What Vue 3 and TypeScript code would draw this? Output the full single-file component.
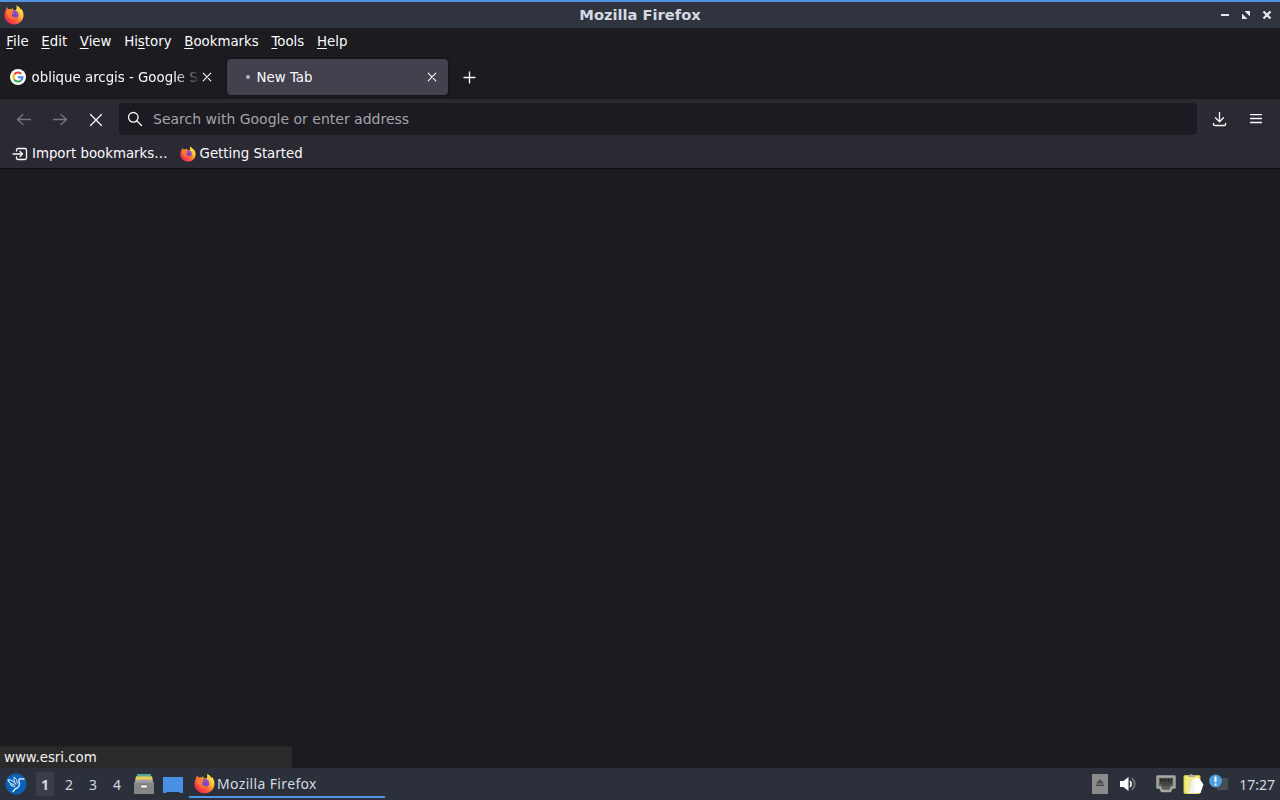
<script setup lang="ts">
import { ref } from 'vue'

interface MenuItem {
  before: string
  key: string
  after: string
}

const menus: MenuItem[] = [
  { before: '', key: 'F', after: 'ile' },
  { before: '', key: 'E', after: 'dit' },
  { before: '', key: 'V', after: 'iew' },
  { before: 'Hi', key: 's', after: 'tory' },
  { before: '', key: 'B', after: 'ookmarks' },
  { before: '', key: 'T', after: 'ools' },
  { before: '', key: 'H', after: 'elp' }
]

const address = ref('')
const desktops = [1, 2, 3, 4]
const currentDesktop = ref(1)
</script>

<template>
  <div class="screen">
    <!-- shared firefox logo -->
    <svg class="defs" width="0" height="0">
      <defs>
        <linearGradient id="fox-body" x1="0.9" y1="0.1" x2="0.15" y2="0.85">
          <stop offset="0" stop-color="#fff04e" />
          <stop offset="0.3" stop-color="#ffc533" />
          <stop offset="0.6" stop-color="#ff6a36" />
          <stop offset="1" stop-color="#ee2a50" />
        </linearGradient>
        <linearGradient id="fox-face" x1="0" y1="0" x2="1" y2="0.6">
          <stop offset="0" stop-color="#ff8a34" />
          <stop offset="1" stop-color="#ff6238" />
        </linearGradient>
        <symbol id="firefox" viewBox="0 0 20 20">
          <path fill="url(#fox-body)" d="M12.200.6c2.600 1 4 2.500 4.600 4.300.3-.3.300-.8.200-1.300 1.700 1.800 2.500 4.200 2.500 6.600 0 5.200-4.200 9.200-9.500 9.200S.5 15.600.5 10.500c0-2.300.6-4.200 1.500-5.800.1-1 .5-1.900 1.200-2.600.1 1 .5 1.700 1.100 2.200 1-.3 2-.3 2.900.100.5-.8 1.200-1.200 2-1.300-.4.700-.5 1.300-.3 1.900l3 .3c.8-1.400 1-3 .3-4.700z" />
          <circle cx="10.300" cy="9.800" r="4.200" fill="#7a46cc" />
          <path d="M8.500 6.200q3.500-1 5.500 1.800 1 2-.2 4-.5-3.500-5.300-5.800z" fill="#9a50c8" />
          <path fill="url(#fox-face)" d="M2.800 7c1.400-1.700 3.500-2 4.800-1l1 1.200 1.400.4c-.2.700-1 1.100-1.700 1.300-.7 1-.3 2.300.7 2.900 1.500.8 3 .3 4.300.6-1 1.800-3.600 2.600-6 1.600C4.600 13 2.900 10 2.800 7z" />
        </symbol>
      </defs>
    </svg>

    <header class="titlebar">
      <svg class="title-logo" width="20" height="20"><use href="#firefox" /></svg>
      <span class="title">Mozilla Firefox</span>
      <div class="window-buttons">
        <svg width="10" height="12" viewBox="0 0 10 12"><path d="M1 6h8" stroke="#e6e9ef" stroke-width="2" /></svg>
        <svg width="10" height="12" viewBox="0 0 10 12"><path d="M3.500 2H9v5.500zM1 4.500V10h5.500z" fill="#e6e9ef" /></svg>
        <svg width="10" height="12" viewBox="0 0 10 12"><path d="M1.500 2.500l7 7m0-7l-7 7" stroke="#e6e9ef" stroke-width="2.300" /></svg>
      </div>
    </header>

    <nav class="menubar">
      <span v-for="m in menus" :key="m.key" class="menu">{{ m.before }}<u>{{ m.key }}</u>{{ m.after }}</span>
    </nav>

    <div class="tabs">
      <div class="tab">
        <svg class="favicon" width="16" height="16" viewBox="0 0 16 16">
          <circle cx="8" cy="8" r="8" fill="#fff" />
          <g fill="none" stroke-width="2">
            <path d="M4.200 5.500A4.600 4.600 0 0 1 11.300 4.800" stroke="#ea4335" />
            <path d="M4.200 10.500A4.600 4.600 0 0 1 4.200 5.500" stroke="#fbbc05" />
            <path d="M11 11.500A4.600 4.600 0 0 1 4.200 10.500" stroke="#34a853" />
            <path d="M8 8.200h4.500A4.600 4.600 0 0 1 11 11.500" stroke="#4285f4" />
          </g>
        </svg>
        <span class="tab-label">oblique arcgis - Google Search</span>
        <svg class="tab-close" width="10" height="10" viewBox="0 0 10 10"><path d="M1.200 1.200l7.600 7.600m0-7.600l-7.600 7.600" /></svg>
      </div>
      <div class="tab active">
        <i class="busy"></i>
        <span class="tab-label">New Tab</span>
        <svg class="tab-close" width="10" height="10" viewBox="0 0 10 10"><path d="M1.200 1.200l7.600 7.600m0-7.600l-7.600 7.600" /></svg>
      </div>
      <svg class="new-tab" width="14" height="14" viewBox="0 0 14 14"><path d="M6.500 2v11M1 7.500h11" /></svg>
    </div>

    <div class="toolbar">
      <div class="nav-buttons">
        <svg class="off" width="16" height="16" viewBox="0 0 16 16"><path d="M14.500 7.500H1.500M7 2.500L1.500 7.500 7 12.500" /></svg>
        <svg class="off" width="16" height="16" viewBox="0 0 16 16"><path d="M1.500 7.500h13M9 2.500L14.500 7.500 9 12.500" /></svg>
        <svg width="16" height="16" viewBox="0 0 16 16"><path d="M2.500 2.500l11 11m0-11l-11 11" /></svg>
      </div>
      <div class="urlbar">
        <svg width="16" height="16" viewBox="0 0 16 16"><circle cx="6.300" cy="6.300" r="4.800" /><path d="M10 10l4.500 4.500" /></svg>
        <input v-model="address" placeholder="Search with Google or enter address">
      </div>
      <svg class="download" width="16" height="16" viewBox="0 0 16 16"><path d="M7.500 0v9.500M3.500 5.700l4 4 4-4M1.500 11.500v.7q0 1.300 1.300 1.300h9.500q1.300 0 1.300-1.300v-.7" /></svg>
      <svg class="hamburger" width="14" height="12" viewBox="0 0 14 12"><path d="M1.500.5h11M1.500 4.500h11M1.500 8.500h11" /></svg>
    </div>

    <div class="bookmarks">
      <svg class="import" width="16" height="16" viewBox="0 0 16 16"><path d="M4.500 5V4q0-1.500 1.500-1.500h7q1.500 0 1.500 1.500v8q0 1.500-1.500 1.500H6q-1.500 0-1.500-1.500v-1M1 8h9.500M8 5.500L10.500 8 8 10.500" /></svg>
      <span class="import-label">Import bookmarks…</span>
      <svg width="16" height="16"><use href="#firefox" /></svg>
      <span class="started-label">Getting Started</span>
    </div>

    <main class="page">
      <div class="status">www.esri.com</div>
    </main>

    <footer class="panel">
      <svg class="start" width="22" height="22" viewBox="0 0 22 22">
        <circle cx="11" cy="11" r="10.500" fill="#0a62b8" />
        <!-- hummingbird: wings, head with beak, tail -->
        <g fill="none" stroke="#d9efff" stroke-linecap="round" stroke-linejoin="round">
          <path d="M3 6.500c3 .3 5.800 1.800 8 4.500M3 6.500c.6 2.800 2.800 4.500 6 5M5.500 11.500c1 1.500 2.700 2 4.500 1.500" stroke-width="1.100" />
          <path d="M9.500 8.500c-.6-1.500-.7-3-.3-4.500 2 1.600 3 3.500 3 6" stroke-width="1" />
          <path d="M19 6l-3-.2c-1.700-.3-2.500.9-2 2.500 1.100 3.600 0 6.500-3.700 7.400L8 18.500" stroke-width="1.400" />
        </g>
      </svg>
      <div class="desktops">
        <span v-for="d in desktops" :key="d" class="desktop" :class="{ current: d === currentDesktop }">{{ d }}</span>
      </div>
      <svg class="files" width="20" height="22" viewBox="0 0 20 22">
        <path d="M3.500 1h13l1 3H2.500z" fill="#54a99a" />
        <path d="M2 3.500h16l1 4H1z" fill="#e8d35a" />
        <path d="M2.500 6.500h15L20 10H0z" fill="#a2a2a2" />
        <path d="M0 9.500h20V20q0 1-1 1H1q-1 0-1-1z" fill="#878787" />
        <rect x="6" y="11.500" width="8" height="4" rx="1" fill="#777" />
        <rect x="7" y="12.500" width="6" height="2" fill="#fff" />
      </svg>
      <svg class="show-desktop" width="20" height="16" viewBox="0 0 20 16"><path d="M0 0h20v16h-3l-1-1H4l-1 1H0z" fill="#4a90e2" /></svg>
      <div class="task">
        <svg width="21" height="21"><use href="#firefox" /></svg>
        <span>Mozilla Firefox</span>
      </div>

      <div class="tray">
        <svg class="eject" width="16" height="20" viewBox="0 0 16 20">
          <rect width="16" height="20" fill="#8b8b8b" />
          <path d="M8 5l4 4.500H4zM4 10.500h8v1.500H4z" fill="#4b4b4b" />
        </svg>
        <svg class="volume" width="17" height="16" viewBox="0 0 17 16">
          <path d="M0 5h3.500L8.500 1v14l-5-4H0z" fill="#fff" />
          <path d="M10 5q2.500 3 0 6" fill="none" stroke="#f0f0f0" stroke-width="1.700" />
          <path d="M12 2.200q5.500 5.800 0 11.600" fill="none" stroke="#737983" stroke-width="1.700" />
        </svg>
        <svg class="network" width="20" height="18" viewBox="0 0 20 18">
          <path d="M1.500 1.500h17v11h-2.700l-1.600 3.500H5.800l-1.600-3.500H1.500z" fill="#5d5d59" stroke="#a8a8a4" stroke-width="2.400" stroke-linejoin="round" />
          <path d="M4 4h12v5h-2v2H6V9H4z" fill="#45453f" />
          <path d="M5 3.500v3M7.500 3.500v3M10 3.500v3M12.500 3.500v3M15 3.500v3" stroke="#1f1f1a" stroke-width="1.300" />
        </svg>
        <svg class="clipboard" width="21" height="22" viewBox="0 0 21 22">
          <rect x="1" y="2.500" width="16" height="18" rx="1" fill="#f0ec7a" stroke="#c9c63a" />
          <path d="M5 4V2h2q1.500-2 3 0h2v2z" fill="#aaa" />
          <path d="M8 6.500l7-1.500 4.500 5-2 8-3 2.500H5z" fill="#f4f4ee" />
          <path d="M12 5l4 .5 4.500 6-3 8.500-6-1z" fill="#fff" />
          <path d="M8 7L6 19" stroke="#d4d4c9" stroke-width=".8" />
        </svg>
        <svg class="notice" width="20" height="18" viewBox="0 0 20 18">
          <path d="M8 4h11v12H8z" fill="#454e50" />
          <circle cx="6.500" cy="7" r="6.400" fill="#4d9ede" />
          <path d="M6.500 2.500V8M6.500 9.500v2" stroke="#fff" stroke-width="2" />
        </svg>
        <span class="clock">17:27</span>
      </div>
    </footer>
  </div>
</template>

<style>
body {
  margin: 0;
  background: #1c1b22;
}
</style>

<style scoped>
.screen {
  width: 1280px;
  height: 800px;
  display: flex;
  flex-direction: column;
  overflow: hidden;
  background: #1c1b20;
  color: #fbfbfe;
  font-family: 'DejaVu Sans', sans-serif;
  font-size: 13.33px;
}

svg {
  display: block;
  flex: none;
}

.defs {
  position: absolute;
}

.titlebar {
  box-sizing: border-box;
  height: 28px;
  flex: none;
  display: grid;
  grid-template-columns: 100px 1fr 100px;
  align-items: center;
  border-top: 2px solid #5294e2;
  background: #2f343f;
}

.title-logo {
  margin-left: 4px;
}

.title {
  text-align: center;
  font-size: 14.67px;
  line-height: 18px;
  font-weight: bold;
  color: #d3dae3;
}

.window-buttons {
  display: flex;
  justify-content: flex-end;
  gap: 11px;
  padding-right: 8px;
}

.menubar {
  height: 27px;
  flex: none;
  display: flex;
  align-items: center;
  gap: 12.7px;
  padding-left: 6.3px;
}

.menu {
  white-space: pre;
}

.menu u {
  text-underline-offset: 2px;
  text-decoration-thickness: 1px;
}

.tabs {
  height: 43px;
  flex: none;
  display: flex;
  align-items: center;
}

.tab {
  box-sizing: border-box;
  width: 221px;
  height: 36px;
  display: flex;
  align-items: center;
  padding: 0 11px 0 10px;
  border-radius: 4px;
}

.tab:first-child {
  margin-right: 6px;
}

.tab-label {
  flex: 1;
  padding: 2px 0 0 5.6px;
  overflow: hidden;
  white-space: nowrap;
}

.tab:first-child .tab-label {
  box-sizing: border-box;
  flex: none;
  width: 173px;
  mask-image: linear-gradient(to right, #000 148px, transparent 176px);
}

.tab:first-child .tab-close {
  margin-left: 3px;
}

.tab.active {
  background: #42414d;
  box-shadow: 0 0 3px rgba(0, 0, 0, 0.6);
}

.busy {
  width: 4px;
  height: 4px;
  margin: 0 1px 0 9px;
  border-radius: 50%;
  background: #b4b3bb;
}

.tab-close,
.new-tab,
.toolbar svg,
.import {
  fill: none;
  stroke: #fbfbfe;
  stroke-width: 1.3;
  stroke-linecap: round;
  stroke-linejoin: round;
}

.tab-close {
  stroke-width: 1.1;
}

.new-tab {
  margin-left: 15px;
}

.toolbar {
  box-sizing: border-box;
  height: 42px;
  flex: none;
  display: flex;
  align-items: center;
  border-top: 1px solid #17161b;
  background: #2b2a33;
}

.nav-buttons {
  display: flex;
  gap: 20px;
  padding: 1px 15px 0 16px;
}

.toolbar svg.off {
  stroke: #77767e;
}

.urlbar {
  width: 1078px;
  height: 32px;
  box-sizing: border-box;
  display: flex;
  align-items: center;
  margin-bottom: 1px;
  padding-left: 8px;
  border-radius: 4px;
  background: #1c1b22;
}

.urlbar input {
  flex: 1;
  margin-left: 10px;
  padding: 0;
  border: none;
  outline: none;
  background: transparent;
  color: #fbfbfe;
  font: inherit;
  font-size: 14px;
}

.urlbar input::placeholder {
  color: #a4a4a7;
  opacity: 1;
}

.download {
  margin-left: 15px;
}

.hamburger {
  margin-left: 21px;
}

.bookmarks {
  box-sizing: border-box;
  height: 29px;
  flex: none;
  display: flex;
  align-items: center;
  padding: 0 0 1px 12px;
  border-bottom: 1px solid #0e0d12;
  background: #2b2a33;
}

.import-label {
  margin: 0 12px 0 4px;
}

.started-label {
  margin-left: 4px;
}

.page {
  flex: 1;
  display: flex;
  align-items: flex-end;
}

.status {
  box-sizing: border-box;
  width: 292px;
  height: 22px;
  padding-left: 4px;
  border-top: 1px solid #242427;
  line-height: 21px;
  background: #2a2a2b;
  color: #f2f2f2;
}

.panel {
  height: 32px;
  flex: none;
  display: flex;
  align-items: center;
  background: #2b303b;
  color: #d3dae3;
  font-family: 'Noto Sans', sans-serif;
  font-size: 14px;
}

.start {
  margin-left: 5px;
}

.desktops {
  display: flex;
  margin-left: 6px;
}

.desktop {
  width: 24px;
  line-height: 33px;
  text-align: center;
}

.desktop.current {
  width: 18px;
  height: 24px;
  margin: 4px 3px;
  line-height: 25px;
  background: #3a3e49;
  font-weight: bold;
}

.files {
  margin-left: 5px;
}

.show-desktop {
  margin: 1px 0 0 9px;
}

.task {
  box-sizing: border-box;
  width: 196px;
  height: 30px;
  display: flex;
  align-items: center;
  margin-left: 6px;
  margin-bottom: 2px;
  padding: 2px 0 0 5px;
  border-bottom: 2px solid #5294e2;
}

.task span {
  padding-top: 2px;
  margin-left: 2px;
  line-height: 22px;
  letter-spacing: 0.35px;
}

.tray {
  display: flex;
  align-items: center;
  margin-left: auto;
  padding-right: 5px;
}

.volume {
  margin-left: 12px;
}

.network {
  margin-left: 19px;
}

.clipboard {
  margin-left: 7px;
}

.notice {
  margin: -2px 0 0 5px;
}

.clock {
  margin-left: 10px;
}
</style>
